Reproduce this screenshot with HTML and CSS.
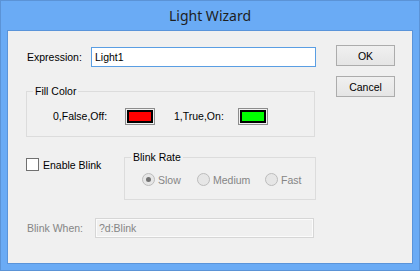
FILE: index.html
```html
<!DOCTYPE html>
<html lang="en">
<head>
  <meta charset="UTF-8" />
  <title>Light Wizard</title>
  <link rel="stylesheet" href="styles.css">
</head>
<body>
  <div class="window">
    <div class="titlebar">Light Wizard</div>

    <div class="client">
      <div class="main">
        <div class="field-row expr-row">
          <span class="field-label">Expression:</span>
          <div class="textbox focused">Light1</div>
        </div>

        <div class="group fill-group">
          <span class="group-title">Fill Color</span>
          <div class="swatch-row">
            <span class="swatch-label">0,False,Off:</span>
            <span class="swatch"><span class="swatch-fill red"></span></span>
            <span class="swatch-label second">1,True,On:</span>
            <span class="swatch"><span class="swatch-fill green"></span></span>
          </div>
        </div>

        <div class="blink-row">
          <div class="check"><span class="checkbox"></span>Enable Blink</div>
          <div class="group rate-group">
            <span class="group-title">Blink Rate</span>
            <div class="radio-row">
              <span class="radio-item slow"><span class="radio checked"><span class="dot"></span></span>Slow</span>
              <span class="radio-item medium"><span class="radio"></span>Medium</span>
              <span class="radio-item"><span class="radio"></span>Fast</span>
            </div>
          </div>
        </div>

        <div class="field-row when-row disabled">
          <span class="field-label">Blink When:</span>
          <div class="textbox">?d:Blink</div>
        </div>
      </div>

      <div class="buttons">
        <button class="btn">OK</button>
        <button class="btn">Cancel</button>
      </div>
    </div>
  </div>
</body>
</html>
```

FILE: styles.css
```css
body { margin: 0; font-family: "Liberation Sans", Arial, sans-serif; font-size: 10.5px; color: #000; }

.window { width: 420px; height: 271px; box-sizing: border-box; border: 1px solid #5b93d6; background: #6aabf5; display: flex; flex-direction: column; }
.titlebar { height: 29px; line-height: 29px; text-align: center; font-family: "Noto Sans", sans-serif; font-size: 14px; color: #1e1e1e; }
.client { flex: 1; margin: 0 6px 6px; border: 1px solid #5a94da; background: #f0f0f0; padding: 14px 0 0 18px; display: flex; }

.main { width: 290px; }
.field-row { display: flex; align-items: center; height: 20px; }
.expr-row { margin-top: 2px; }
.field-label { box-sizing: border-box; padding-left: 1px; }
.expr-row .field-label { width: 65px; }
.when-row .field-label { width: 69px; }
.textbox { box-sizing: border-box; height: 20px; line-height: 18px; padding-left: 3px; border: 1px solid #d6d6d6; }
.textbox.focused { width: 225px; background: #fff; border-color: #5a9ee3; }
.when-row { margin-top: 18px; }
.when-row .textbox { width: 219px; background: #f0f0f0; box-shadow: inset 0 0 0 1px #fbfbfb; }
.disabled { color: #858585; }

.group { border: 1px solid #dcdcdc; display: flex; flex-direction: column; align-items: flex-start; }
.group-title { line-height: 13px; margin: -7px 0 0 6px; padding: 0 2px; background: #f0f0f0; }
.fill-group { margin-top: 24px; width: 289px; box-sizing: border-box; }
.swatch-row { display: flex; align-items: center; height: 16px; margin-top: 10px; margin-bottom: 12px; padding-left: 26px; }
.swatch-label { width: 72px; }
.swatch-label.second { width: 64px; margin-left: 19px; }
.swatch { box-sizing: border-box; width: 30px; height: 17px; border: 1px solid #8c8c8c; padding: 1px; display: flex; }
.swatch-fill { flex: 1; border: 2px solid #000; }
.red { background: #ff0000; }
.green { background: #00ff00; }

.blink-row { display: flex; margin-top: 20px; }
.check { width: 98px; height: 13px; margin-top: 1px; display: flex; align-items: center; }
.checkbox { box-sizing: border-box; width: 13px; height: 13px; border: 1px solid #707070; background: #fff; margin-right: 4px; }
.rate-group { width: 192px; box-sizing: border-box; }
.radio-row { display: flex; align-items: center; height: 13px; margin: 9px 0 13px; padding-left: 17px; color: #858585; }
.radio-item { display: flex; align-items: center; }
.radio-item.slow { width: 55px; }
.radio-item.medium { width: 68px; }
.radio { box-sizing: border-box; width: 13px; height: 13px; border-radius: 50%; border: 1px solid #bcbcbc; background: #e6e6e6; margin-right: 3px; display: flex; align-items: center; justify-content: center; }
.dot { width: 5px; height: 5px; border-radius: 50%; background: #727272; }

.buttons { margin-left: 20px; display: flex; flex-direction: column; gap: 10px; }
.btn { box-sizing: border-box; width: 59px; height: 21px; padding: 0; border: 1px solid #acacac; background: linear-gradient(#f0f0f0, #e5e5e5); font: inherit; color: #000; }
```
